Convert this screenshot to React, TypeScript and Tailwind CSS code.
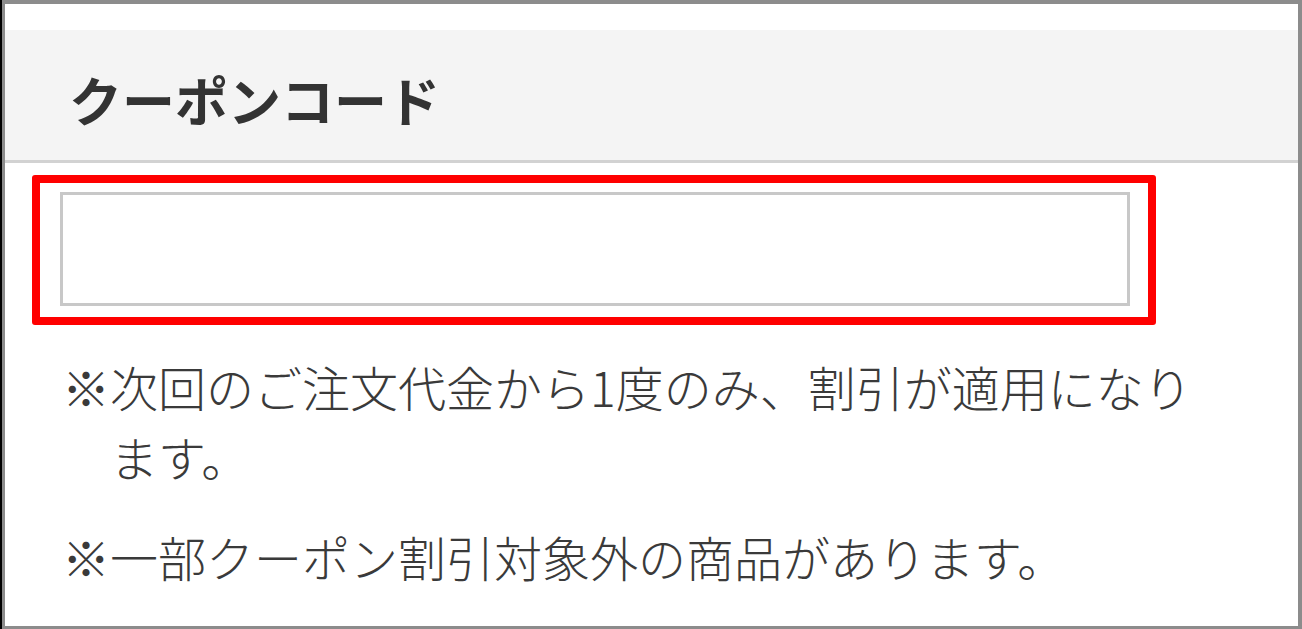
const jp = { fontFamily: '"Noto Sans CJK JP", "Noto Sans", sans-serif' };

const notes = [
  "※次回のご注文代金から1度のみ、割引が適用になります。",
  "※一部クーポン割引対象外の商品があります。",
];

export default function App() {
  return (
    <div className="w-[1302px] h-[629px] bg-white border-l-2 border-black" style={jp}>
      <div className="h-full flex flex-col border-t-4 border-b-[3px] border-r-4 border-l-[3px] border-[#8c8c8c]">
        <div className="h-[26px]" />
        <div className="h-[133px] bg-[#f4f4f4] border-b-[3px] border-[#d2d2d2] flex items-center pl-[64px] pt-[8px]">
          <h2 className="text-[53px] leading-none font-bold text-[#333]">クーポンコード</h2>
        </div>
        <div className="pt-[12px] pl-[27px]">
          <div className="w-[1124px] h-[150px] border-[8px] border-[#ff0000] rounded-[3px]">
            <input
              type="text"
              className="block ml-[20px] mt-[9px] w-[1070px] h-[114px] border-[3px] border-[#c8c8c8] bg-white outline-none"
            />
          </div>
        </div>
        <div className="pt-[26px] flex flex-col gap-[30px]">
          {notes.map((n) => (
            <p
              key={n}
              className="ml-[57px] w-[1150px] pl-[48px] -indent-[48px] text-[48px] leading-[70px] font-light text-[#3a3a3a]"
            >
              {n}
            </p>
          ))}
        </div>
      </div>
    </div>
  );
}
